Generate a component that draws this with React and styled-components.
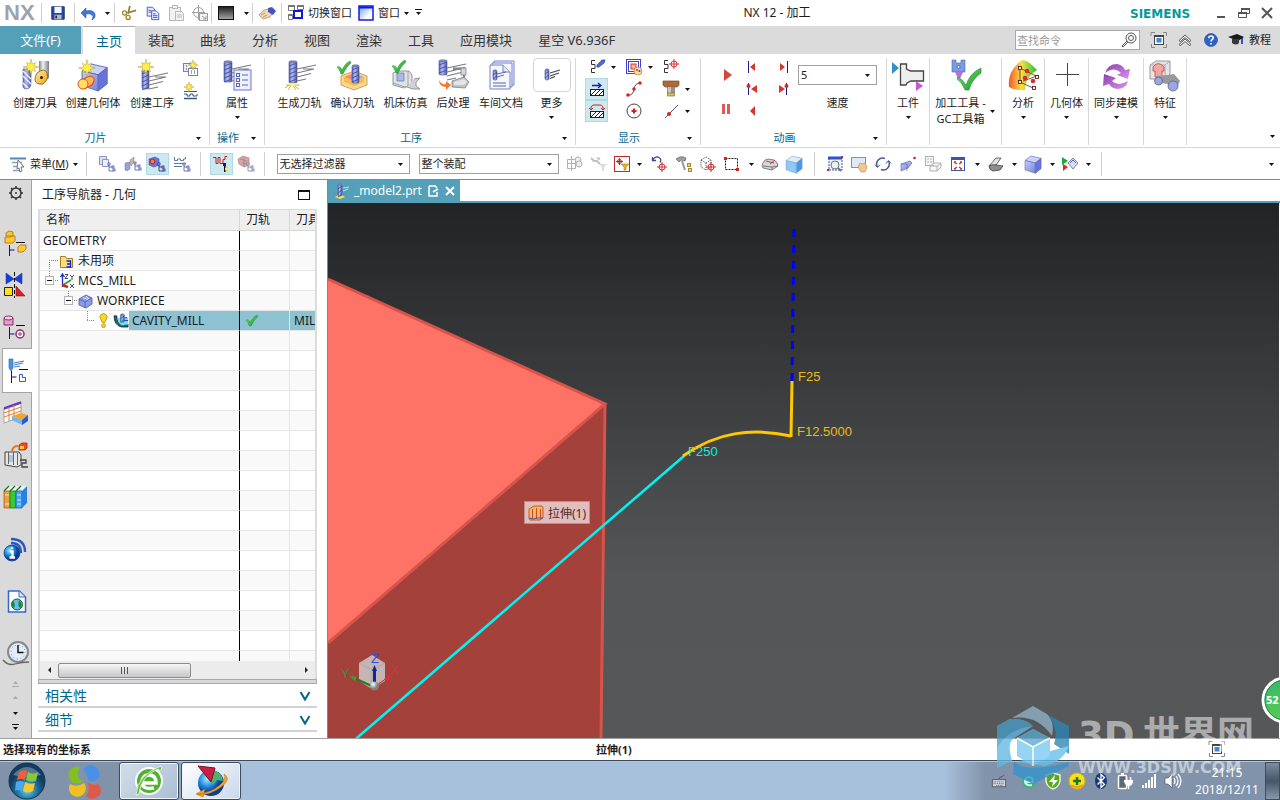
import React from "react";
import styled, { createGlobalStyle, css } from "styled-components";

const GlobalStyle = createGlobalStyle`
  *, *::before, *::after { box-sizing: border-box; }
  html, body { margin: 0; padding: 0; }
  body {
    font-family: "Noto Sans", "Noto Sans CJK SC", sans-serif;
    font-size: 11px;
    color: #1c1c1c;
    background: #fff;
  }
  button, input, select { font: inherit; color: inherit; }
  button { border: 0; background: none; padding: 0; margin: 0; }
`;

/* ---------- shared drawing parts ---------- */

const Defs = () => (
  <DefsSvg aria-hidden="true">
    <defs>
      <linearGradient id="blue" x1="0" x2="1"><stop offset="0" stopColor="#5c66b8" /><stop offset=".4" stopColor="#b4bef2" /><stop offset="1" stopColor="#4a54a4" /></linearGradient>
      <linearGradient id="steel" x1="0" x2="1"><stop offset="0" stopColor="#808288" /><stop offset=".4" stopColor="#f0f0f2" /><stop offset="1" stopColor="#7c7e84" /></linearGradient>
      <linearGradient id="box" x1="0" x2="1" y2="1"><stop offset="0" stopColor="#c3cdf8" /><stop offset="1" stopColor="#7483e0" /></linearGradient>
      <linearGradient id="gold" x1="0" x2="1" y2="1"><stop offset="0" stopColor="#fff2a0" /><stop offset="1" stopColor="#f0a010" /></linearGradient>
      <linearGradient id="green" x1="0" x2="1" y2="1"><stop offset="0" stopColor="#7be060" /><stop offset="1" stopColor="#129a30" /></linearGradient>
      <linearGradient id="rainbow" x1="0" x2="1"><stop offset="0" stopColor="#f05a30" /><stop offset=".45" stopColor="#f8e040" /><stop offset="1" stopColor="#20c040" /></linearGradient>
      <linearGradient id="pink" x1="0" x2="1"><stop offset="0" stopColor="#f8a020" /><stop offset=".5" stopColor="#f070c0" /><stop offset="1" stopColor="#60e0e0" /></linearGradient>
      <linearGradient id="purple" x1="0" x2="1" y2="1"><stop offset="0" stopColor="#8f3fb0" /><stop offset="1" stopColor="#d595ea" /></linearGradient>
      <linearGradient id="dark" x2="0" y2="1"><stop offset="0" stopColor="#1c1c1c" /><stop offset="1" stopColor="#a8a8a8" /></linearGradient>
      <linearGradient id="skyfade" x2="1" y2="1"><stop offset="0" stopColor="#68a0e8" /><stop offset=".7" stopColor="#ffffff" /></linearGradient>
      <radialGradient id="orb" cy=".75"><stop offset="0" stopColor="#58d8f4" /><stop offset=".6" stopColor="#206a9c" /><stop offset="1" stopColor="#123c60" /></radialGradient>
      <radialGradient id="ball" cx=".35" cy=".3"><stop offset="0" stopColor="#ffffff" /><stop offset="1" stopColor="#808080" /></radialGradient>
      <radialGradient id="globe" cx=".35" cy=".35"><stop offset="0" stopColor="#a0f0ff" /><stop offset=".6" stopColor="#2088e0" /><stop offset="1" stopColor="#0a3c98" /></radialGradient>
      <linearGradient id="badge" x2="0" y2="1"><stop offset="0" stopColor="#35b869" /><stop offset="1" stopColor="#58cc50" /></linearGradient>
    </defs>
  </DefsSvg>
);
const DefsSvg = styled.svg`position: absolute; width: 0; height: 0;`;

const starPoints = (cx, cy, r) => {
  const pts = [];
  for (let i = 0; i < 16; i += 1) {
    const rad = i % 2 ? r * 0.4 : i % 4 ? r * 0.8 : r;
    const a = (Math.PI * i) / 8;
    pts.push(`${(cx + rad * Math.sin(a)).toFixed(1)},${(cy - rad * Math.cos(a)).toFixed(1)}`);
  }
  return pts.join(" ");
};
const Star = ({ cx, cy, r }) => <polygon points={starPoints(cx, cy, r)} fill="#fff04c" stroke="#b59a3c" strokeWidth=".5" />;
const Mill = ({ x, y, w = 8, h = 22 }) => (
  <g>
    <rect x={x} y={y} width={w} height={h} rx="1.5" fill="url(#blue)" stroke="#4c5494" strokeWidth=".6" />
    {Array.from({ length: Math.floor(h / 4) }, (_, i) => (
      <path key={i} d={`M${x} ${y + 5 + i * 4}l${w} -3`} stroke="#434b98" strokeWidth=".9" />
    ))}
    <ellipse cx={x + w / 2} cy={y + 1} rx={w / 2} ry="1.3" fill="#7480b8" />
  </g>
);
const Feed = ({ x, y }) => (
  <path d={`M${x} ${y + 4}l19 -4M${x} ${y + 8}l17 -4l-11 0M${x} ${y + 12}l14 -3.500M${x} ${y + 16}l9 -2`} fill="none" stroke="#7a7c82" strokeWidth="1.200" />
);
const Tick = ({ x, y, s = 1 }) => (
  <path transform={`translate(${x} ${y}) scale(${s})`} d="M0 6C2 5 4 6 5 9C7 5 9 2 13 0L14 2C10 5 8 9 6 13H4C3 10 2 8 0 6z" fill="url(#green)" stroke="#109030" strokeWidth=".5" />
);
const Cube = ({ x, y, s = 1, fill = "url(#box)", top = "#c8d2fa", side = "#6474d8", line = "#5a66b4" }) => (
  <g transform={`translate(${x} ${y}) scale(${s})`} stroke={line} strokeWidth=".5">
    <path d="M0 4L5 0L14 2L9 6z" fill={top} />
    <path d="M0 4L9 6V15L0 12z" fill={fill} />
    <path d="M9 6L14 2V11L9 15z" fill={side} />
  </g>
);
const Branch = ({ x, y, c = "#4c58a4" }) => (
  <g fill="#fff" stroke={c} strokeWidth=".8"><path d={`M${x} ${y}v7h4M${x} ${y + 3}h3`} fill="none" /><rect x={x - 1} y={y - 1} width="2" height="2" /><rect x={x + 4} y={y + 5} width="2" height="2" /><rect x={x + 3} y={y + 2} width="2" height="2" /></g>
);
const Target = ({ x, y, r = 3 }) => (
  <g stroke="#d02020" strokeWidth=".9" fill="none"><circle cx={x} cy={y} r={r} /><path d={`M${x - r - 2} ${y}H${x + r + 2}M${x} ${y - r - 2}V${y + r + 2}`} /></g>
);
const Hatch = () => (
  <g stroke="#202020" fill="none"><rect x="2.500" y="9.500" width="13" height="6" fill="#fff" /><path d="M3 15l5-5M7 15l5-5M11 15l4-4" strokeWidth="1" /></g>
);

/* ---------- icon drawings, each on its own grid ---------- */

const art = {
  createTool: [32, <><path d="M4 10h8v14q0 6-5 6q-4 0-3-6z" fill="url(#blue)" stroke="#505898" strokeWidth=".6" /><path d="M4 17l8 8M4 12l8 8M4 24l5 5" stroke="#eef" strokeWidth="1.500" /><path d="M20 2h10v17l-3 2-7-7z" fill="url(#steel)" /><path d="M18 14q8-6 10 0q2 7-4 11q-7 1-8-4q0-4 2-7z" fill="url(#gold)" stroke="#7a5a20" strokeWidth=".8" /><circle cx="22.500" cy="18.500" r="1.500" fill="#222" /><Star cx={12} cy={8} r={8} /></>],
  createGeo: [32, <><Cube x={5} y={5} s={1.8} /><path d="M6 20l7-3q5 1 4 5t-4 5l-6 3" fill="#ffb850" stroke="#e05020" strokeWidth="1.200" /><circle cx="6" cy="25" r="5" fill="#ffe060" stroke="#e05020" /><Star cx={10} cy={9} r={8.500} /></>],
  createOp: [32, <><Mill x={6} y={10} w={7} h={20} /><Feed x={13} y={14} /><Star cx={10} cy={8} r={8} /></>],
  program: [18, <><rect x="1.500" y="3.500" width="8" height="8" fill="#e8ebf8" stroke="#7880b0" /><rect x="6.500" y="8.500" width="9" height="7" fill="#fff" stroke="#7880b0" /><path d="M9 11h1M12 11h1M9 13h1M12 13h1M4 6h1M4 9h1" stroke="#444" /><Star cx={11} cy={5} r={5} /></>],
  method: [18, <><path d="M2 9.500h13M2 12h3v2h3v-2h3v2h4v-2" stroke="#2c5a8a" fill="none" /><path d="M2 16.500h13" stroke="#2c5a8a" strokeWidth="1.500" /><Star cx={7} cy={5} r={5} /></>],
  attrs: [32, <><Mill x={3} y={2} w={8} h={21} /><Feed x={11} y={6} /><rect x="13" y="11" width="17" height="20" fill="#eef0ff" stroke="#6a76c8" /><g fill="#fff0a0" stroke="#5a66b8"><rect x="15.500" y="14.500" width="3" height="3" /><rect x="15.500" y="19.500" width="3" height="3" /><rect x="15.500" y="24.500" width="3" height="3" /></g><path d="M21 16h6M21 21h6M21 26h6" stroke="#5a66b8" /></>],
  generate: [32, <><path d="M2 26h14M4 31l4-6 4 6M1 29l6-4M15 30l-6-4" stroke="#d8b838" /><Mill x={5} y={2} w={8} h={22} /><Feed x={13} y={6} /><path d="M4 25l4-1 5 1-4 3z" fill="#fff27a" /></>],
  verify: [32, <><path d="M4 17l13-5 13 5v9l-13 5-13-5z" fill="#f8d890" stroke="#c89030" strokeWidth=".8" /><path d="M7 18l10-4 10 4-10 4z" fill="url(#pink)" /><path d="M7 18v5l10 4 10-4v-5l-10 4z" fill="#f4bc58" /><Mill x={15} y={6} w={7} h={18} /><Tick x={0} y={2} /></>],
  simulate: [32, <><path d="M3 14l4-2h12l3 4v9l-8 4-11-3z" fill="#e0e2e6" stroke="#94969c" /><path d="M7 14h7v8H7z" fill="#a8b8e8" stroke="#6c7690" strokeWidth=".7" /><path d="M18 12v15M3 24l12 4 10-2" stroke="#a0a2a8" fill="none" /><path d="M24 20l6-1-4 4v4l4 3h-7l-6-2" fill="#d0d2d6" stroke="#94969c" /><Tick x={2} y={1} /></>],
  post: [32, <><Mill x={2} y={1} w={8} h={15} /><Feed x={10} y={5} /><path d="M16 10h12M27 8v16" stroke="#85878c" strokeWidth="2" /><rect x="24" y="9" width="5" height="7" fill="#d4d6da" stroke="#777" strokeWidth=".7" /><path d="M15 22l12-4 5 5-4 6-13-1z" fill="#c0c2c8" stroke="#707278" strokeWidth=".7" /><path d="M17 23l10-3 3 3-3 3-10 0z" fill="#e2e4e8" /><path d="M2 21q2 5 7 4v-3l5 4-5 5v-3q-7 0-7-7z" fill="#f07a30" /></>],
  docs: [32, <><g fill="#f4f5fd" stroke="#7582c8"><path d="M9 2h20v24H9z" /><path d="M7 4h20v24H7z" /><path d="M5 6h13l7 7v17H5z" /></g><path d="M18 6v7h7" fill="#dfe4fa" stroke="#7582c8" /><Mill x={8} y={11} w={4} h={10} /><path d="M12 15l9-2M12 18l7-2M8 24h13M8 27h13" stroke="#5a66a8" /></>],
  more: [20, <><Mill x={3} y={4} w={4} h={11} /><path d="M8 8l10-3M8 11l9-3M8 13.500l5-2" stroke="#44464c" strokeWidth="1.200" /></>],
  probe: [18, <><path d="M7 2.500H3.500v4H7M7 6.500v4H3.500v4H7" stroke="#333" fill="none" /><path d="M9 7l5-5 3 0-1 3-5 4q-3 1-2-2z" fill="#4f6cd8" stroke="#2c408c" strokeWidth=".7" /></>],
  layers: [18, <><g fill="none" stroke="#4040d0"><rect x="1.500" y="1.500" width="14" height="14" /><rect x="3.500" y="3.500" width="10" height="10" /></g><rect x="6" y="6" width="5" height="5" fill="#ffb090" stroke="#d04020" /><circle cx="13" cy="13" r="4" fill="#f5dca0" stroke="#b08040" strokeWidth=".7" /><circle cx="12" cy="12" r="1" fill="#d03030" /><circle cx="14.500" cy="13" r="1" fill="#3040c0" /></>],
  pointer: [18, <><path d="M6 2.500H2.500v4H6M6 6.500v4H2.500v4H6" stroke="#333" fill="none" /><Target x={12} y={6} r={3} /></>],
  hatchArrow: [18, <><Hatch /><path d="M4 5.500h9M10 3l3 2.500-3 2.500" stroke="#1020c0" fill="none" strokeWidth="1.300" /></>],
  hatchLoop: [18, <><Hatch /><path d="M3 8V5q1-2 3-2h6q2 0 3 2v3M1 6l2 2 2-2M13 6l2 2 2-2" stroke="#d02020" fill="none" /></>],
  curve: [18, <><path d="M3 15q5 1 6-6q1-6 6-6" stroke="#8a4040" fill="none" /><circle cx="3" cy="15" r="1.800" fill="#d02828" /><circle cx="9" cy="9" r="1.800" fill="#d02828" /><circle cx="15" cy="3" r="1.800" fill="#d02828" /></>],
  circleDot: [18, <><circle cx="9" cy="9" r="7" fill="none" stroke="#444" /><path d="M6.500 9h5M9 6.500v5" stroke="#d02020" strokeWidth="2" /></>],
  holder: [18, <><path d="M1 1h16v4l-2 2H3L1 5z" fill="#b06838" stroke="#804c28" strokeWidth=".7" /><rect x="5" y="7" width="8" height="6" fill="#909296" /><rect x="6" y="7" width="3" height="6" fill="#c4c6ca" /><rect x="5.500" y="13" width="7" height="3" fill="#e0c040" stroke="#806020" strokeWidth=".6" /></>],
  lineDot: [18, <><path d="M3 16L16 3" stroke="#555" /><circle cx="7" cy="12" r="2" fill="#d02828" /></>],
  play: [14, <path d="M3 1l8 6-8 6z" fill="#d8453f" />],
  pause: [14, <path d="M3 2h3v10H3zM8 2h3v10H8z" fill="#df5a50" />],
  back: [14, <path d="M10 2v10L5 7z" fill="#d8352f" />],
  toStart: [14, <><path d="M3.500 1v12" stroke="#1c1c90" /><path d="M10 3v8L5 7z" fill="#d8352f" /></>],
  toEnd: [14, <><path d="M11.500 1v12" stroke="#1c1c90" /><path d="M4 3v8l5-4z" fill="#d8352f" /></>],
  stepBack: [14, <><path d="M3.500 1v12" stroke="#1c1c90" /><path d="M12 3v8L6 7z" fill="#d8352f" /><circle cx="3.500" cy="4" r="2" fill="#d02828" /></>],
  stepFwd: [14, <><path d="M10.500 1v12" stroke="#1c1c90" /><path d="M3 3v8l6-4z" fill="#d8352f" /><circle cx="10.500" cy="4" r="2" fill="#d02828" /></>],
  part: [32, <><path d="M0 3l7 6-7 6z" fill="#3390c8" /><path d="M24 22l7 5-7 5z" fill="#c858d0" /><path d="M8.500 5h6v5l4 2h13v10H19l-4 2-1 2H8.500z" fill="#eeeeee" stroke="#444" strokeWidth="1.300" /></>],
  gcTool: [32, <><path d="M2 1h4v3h5V1h4v12H2z" fill="#7a9ce0" stroke="#4c6aac" strokeWidth=".6" /><circle cx="8.500" cy="8" r="1.500" fill="#e8eefc" stroke="#345" strokeWidth=".6" /><path d="M5 13h8l-4 9z" fill="#b870dc" /><path d="M8 18q4 2 8 8Q20 14 31 9v5Q22 20 19 31h-4Q12 23 7 20z" fill="url(#green)" stroke="#1c8c34" strokeWidth=".6" /></>],
  analyse: [32, <><path d="M2 28Q0 12 15 1Q20 0 30 11Q18 18 18 31Q8 32 2 28z" fill="url(#rainbow)" /><path d="M13 8v15M13 9l16 8M13 23l13 6M16 22l14-5" stroke="#904838" fill="none" /><g fill="#d83028"><circle cx="20" cy="12" r="2.300" /><circle cx="18" cy="19" r="2.300" /><circle cx="26" cy="22" r="2.300" /></g><g fill="#ffff60" stroke="#400060" strokeWidth=".8"><rect x="11.500" y="7.500" width="3" height="3" /><rect x="11.500" y="21.500" width="3" height="3" /><rect x="28.500" y="16.500" width="3" height="3" /><rect x="25.500" y="27.500" width="3" height="3" /></g></>],
  plus: [32, <path d="M16.500 4v23M5 15.500h23" stroke="#444" />],
  sync: [32, <><path d="M5 14Q8 5 17 5q6 1 8 6l5-1-2 10-11-4 4-2q-7-7-16 0z" fill="url(#purple)" /><path d="M28 22Q26 30 17 30q-6-1-8-5l-6 2 1-12 12 4-4 3q6 6 16 0z" fill="url(#purple)" /></>],
  feature: [32, <><path d="M1 6l6-4h14v13l-5 5H1z" fill="#e4e5e8" stroke="#999" /><path d="M1 6h15v14M16 6l5-4" fill="none" stroke="#aaa" /><path d="M4 8q5-7 11 0v4h-2v6H6v-6H4z" fill="#f0a8a0" stroke="#c84038" strokeWidth=".8" /><path d="M6 17l13-1 6-1 6 7-4 8-5 1-3-6-7-1z" fill="#97999f" /><circle cx="9.500" cy="22" r="4" fill="#98a6ea" stroke="#666" strokeWidth=".8" /><circle cx="24" cy="27" r="5" fill="#98a6ea" stroke="#666" strokeWidth=".8" /></>],
  save: [18, <><path d="M2 2h14v14H2z" fill="#2a4aa0" stroke="#16285c" /><rect x="5" y="2" width="8" height="7" fill="#f4f6fb" /><rect x="5" y="11" width="8" height="5" fill="#b8bcc8" /><rect x="6" y="12" width="2" height="3" fill="#16285c" /></>],
  undo: [18, <path d="M2 9L7 4v3q7-2 9 3q1 4-3 6q2-4 0-5q-2-2-6-1v4z" fill="#3f78d8" stroke="#2858b0" strokeWidth=".6" />],
  cut: [18, <><path d="M8 10L10 1M7 9l10-3" stroke="#908030" strokeWidth="2" /><circle cx="4" cy="9" r="2.300" fill="none" stroke="#a08828" strokeWidth="1.500" /><circle cx="8" cy="14" r="2.300" fill="none" stroke="#a08828" strokeWidth="1.500" /></>],
  copy: [18, <g fill="#e6eaff" stroke="#4450b8"><path d="M2.500 2.500h6l2 2v8h-8z" /><path d="M7.500 6.500h5l3 3v7h-8z" /><path d="M9 10h3M9 12h5M9 14h5M4 6h3M4 8h3" /></g>],
  paste: [18, <g fill="#f2f2f2" stroke="#b8b8b8"><rect x="2.500" y="3.500" width="11" height="13" /><rect x="5.500" y="1.500" width="5" height="3" /><path d="M8.500 7.500h6l2 2v7h-8z" /><path d="M10 11h5M10 13h5" /></g>],
  aim: [18, <g fill="none" stroke="#a0a0a0"><circle cx="7.500" cy="8.500" r="5" /><path d="M7.500 1v15M1 8.500h13" /><rect x="8.500" y="9.500" width="8" height="7" fill="#f4f4f4" /><path d="M11 12l4 3v-3M15 15h-3" /></g>],
  shade: [18, <><rect x="1.500" y="2.500" width="15" height="13" fill="url(#dark)" stroke="#111" /></>],
  hand: [18, <><path d="M1 11l5-5 5-1 4 3-3 5-7 2z" fill="#f0d8b4" stroke="#b09068" strokeWidth=".8" /><path d="M10 4l4-1 4 4-3 4-5-3z" fill="#4454c8" /><path d="M3 11l4-2M5 13l4-2" stroke="#b08858" strokeWidth=".8" /></>],
  switchWin: [18, <g fill="none" strokeWidth="1"><path d="M1.500 1.500h6v5h-6zM10.500 1.500h6v4h-6zM1.500 10.500h4v5h-4z" stroke="#777" /><path d="M1 2h7M10 2h7M1 11h4" stroke="#777" strokeWidth="2" /><rect x="7" y="7" width="8" height="7" fill="#fff" stroke="#1018e0" strokeWidth="2" /></g>],
  win: [18, <><rect x="2" y="2" width="14" height="14" fill="url(#skyfade)" stroke="#1018f0" strokeWidth="1.500" /><path d="M2 3.500h14" stroke="#1018f0" strokeWidth="2" /></>],
  minimise: [14, <path d="M3 11h8" stroke="#555" strokeWidth="2" />],
  restore: [14, <g fill="#fff" stroke="#555"><path d="M4.500 2.500h8v5h-8z" /><path d="M4 3h9" strokeWidth="2" /><path d="M1.500 6.500h8v5h-8z" /><path d="M1 7h9" strokeWidth="2" /></g>],
  close: [14, <path d="M2 2l10 10M12 2L2 12" stroke="#555" strokeWidth="2" />],
  find: [16, <g fill="none" stroke="#555"><circle cx="10" cy="6" r="5" /><circle cx="10" cy="6" r="2.500" /><path d="M6 9l-5 5 1 1 5-5" /></g>],
  fullscreen: [16, <><path d="M0 4V.500h4M12 .500h3.500V4M15.500 12v3.500H12M4 15.500H.500V12" fill="none" stroke="#888" /><rect x="3.500" y="3.500" width="9" height="9" fill="#fff" stroke="#444" /><rect x="5.500" y="6" width="5" height="4.500" fill="#3f87d8" /><path d="M3 4.500h10" stroke="#444" /></>],
  collapse: [16, <path d="M2 8.500L8 3l6 5.500-1.500 1L8 5.500 3.500 9.500zM2 12.500L8 7l6 5.500-1.500 1L8 9.500l-4.500 4z" fill="#fff" stroke="#333" strokeWidth=".8" />],
  help: [16, <><circle cx="8" cy="8" r="6.500" fill="#2c62c4" stroke="#1c4494" strokeWidth=".6" /><path d="M5.800 6.200q0-2.200 2.200-2.200t2.200 2q0 1-1.100 1.700T8 9.500M8 11v1.500" fill="none" stroke="#fff" strokeWidth="1.600" /></>],
  cap: [18, <><path d="M1 6l9-3 7 3-6 4z" fill="#1a1a1a" /><path d="M5 8v4q4 3 7 0V8" fill="#383838" /><path d="M15 7v6" stroke="#1018c0" strokeWidth="1.500" /></>],
  menu: [18, <><path d="M1 3.500h16" stroke="#5c84bc" strokeWidth="2" /><path d="M3 7.500h10M4 11.500h8M4 15.500h8" stroke="#88a0c0" strokeWidth="1.500" /><path d="M9 5l6 7-3 0 1 4-2 1-1-4-2 1z" fill="#fff" stroke="#555" strokeWidth=".8" /></>],
  viewProgram: [18, <><path d="M1.500 1.500h7v8h-7z" fill="#dce0f4" stroke="#8c96c4" /><path d="M4.500 4.500h6v7h-6z" fill="#eef" stroke="#8c96c4" /><Branch x={11} y={9} /></>],
  viewTool: [18, <><path d="M2 8l5-1v7l-3 2-2-1z" fill="#98a2d8" stroke="#6a74ac" strokeWidth=".5" /><path d="M7 5l4-3v5l-3 4z" fill="#c8b4a8" stroke="#907a70" strokeWidth=".5" /><Branch x={12} y={8} /></>],
  viewGeo: [18, <><path d="M1 4l6-2 4 2v6l-5 2-5-2z" fill="#6478d8" stroke="#4450a0" strokeWidth=".6" /><circle cx="4.500" cy="6.500" r="2.300" fill="#f08050" stroke="#c02020" /><Branch x={11} y={9} c="#1c1c80" /></>],
  viewMethod: [18, <><path d="M1.500 2v3.500h3V4h3v1.500h3V4h2V2M1 8.500h12M1 11.500h8" fill="none" stroke="#5c78a4" /><Branch x={11} y={9} /></>],
  showPath: [18, <><path d="M1 2.500h3v6h2v-6h2v6h3v-4h2v-3h2" fill="none" stroke="#c81818" /><path d="M12.500 9v8M12 12h2M12 16h2" stroke="#111" /><rect x="11" y="8" width="3" height="3" fill="#1018a0" /><rect x="14" y="11" width="2" height="2" fill="#f0e040" /><rect x="14" y="15" width="2" height="2" fill="#f0e040" /></>],
  showIpw: [18, <><path d="M1 4l5-3 6 2v7l-5 2-5-3z" fill="#dca4a4" stroke="#b48080" strokeWidth=".7" /><path d="M3 4l7 2M5 8l5 1M7 3v9" stroke="#8a8a8a" strokeWidth=".8" /><Branch x={11} y={9} c="#74809c" /></>],
  ghostTree: [18, <g fill="none" stroke="#b0b0b0"><path d="M1.500 4.500h8v9h-8zM5.500 1v15M1 8.500h8" /><circle cx="12" cy="5" r="3" fill="#eee" /><circle cx="13" cy="9" r="3" fill="#eee" /></g>],
  ghostFilter: [18, <><path d="M1 3l3 3h3l3 3M7 3l3 1" fill="none" stroke="#c0c0c0" strokeWidth="2" /><path d="M9 9h8l-3 3v4h-2v-4z" fill="#dcdcdc" /></>],
  redFilter: [18, <><rect x="1.500" y="1.500" width="15" height="15" fill="#fff" stroke="#c82828" /><g stroke="#a03030" fill="none"><circle cx="6.500" cy="6.500" r="2" /><path d="M6.500 3v7M3 6.500h7" /></g><path d="M8 9h8l-3 3v3h-2v-3z" fill="#f0b020" stroke="#c07818" strokeWidth=".6" /></>],
  undoSel: [18, <><path d="M2.500 6V2M2 5.500h4M2 5.500q4-5 7-3t1 5" fill="none" stroke="#3c4890" strokeWidth="1.300" /><Target x={12} y={12} /></>],
  hammer: [18, <><path d="M1 4q5-4 10-1l-1 3-4-1-2 2z" fill="#9c9ea4" stroke="#666" strokeWidth=".7" /><path d="M7 6l3 9" stroke="#999" strokeWidth="2" /><g fill="#f0d860" stroke="#a08c40"><rect x="12.500" y="8.500" width="3" height="3" /><rect x="13.500" y="13.500" width="3" height="3" /></g></>],
  cubeTarget: [18, <><path d="M2 5l5-3 5 3v7l-5 3-5-3zM2 5l5 3 5-3M7 8v7" fill="none" stroke="#333" strokeDasharray="1 1" strokeWidth=".9" /><Target x={12} y={12} /></>],
  dashRect: [18, <><rect x="2.500" y="3.500" width="12" height="11" fill="none" stroke="#222" strokeDasharray="2 1" /><path d="M1 2h3v3H1zM13 13h3v3h-3z" fill="#d02020" /></>],
  fold: [18, <><path d="M1 11q1-6 6-7l6 1q4 2 4 6l-6 4-9-2z" fill="#d4d6da" stroke="#666" strokeWidth=".8" /><path d="M5 6l8 2M9 9l5-4" stroke="#c02020" strokeWidth=".8" /><path d="M2 11l9 1 6-1M11 12v3" stroke="#666" strokeWidth=".8" fill="none" /></>],
  bluebox: [18, <><Cube x={1} y={1} s={1.150} fill="#8cc8f8" top="#dceefa" side="#4c94e8" line="#78a8d4" /></>],
  fit: [18, <><rect x="3" y="3" width="13" height="12" fill="#eef3ff" stroke="#3050c8" strokeDasharray="2 1" /><path d="M2 3h14" stroke="#3050c8" strokeWidth="3" /><circle cx="9" cy="10" r="4" fill="#e8f0f8" stroke="#777" /><path d="M12 13l3 3" stroke="#777" strokeWidth="2" /><path d="M15 1h2v2h-2zM1 14h2v2H1z" fill="#d02020" /></>],
  pan: [18, <><rect x="1.500" y="2.500" width="14" height="10" fill="#e0e8fa" stroke="#8090c0" /><path d="M8 12l2-4 2 1 3-1 2 4-2 5h-4z" fill="#f0c890" stroke="#b08850" strokeWidth=".6" /></>],
  rotate: [18, <g fill="none" stroke="#4a5c9c" strokeWidth="1.500"><path d="M3.500 12A6 6 0 0 1 11 3.500" /><path d="M14.500 6A6 6 0 0 1 7 14.500" /><path d="M1 9.500l2.500 3 2.500-3M17 8.500l-2.500-3-2.500 3" strokeWidth="1" /></g>],
  persp: [18, <><path d="M2 9l9-3 2 2-4 5-7 3z" fill="url(#box)" stroke="#5060a8" strokeWidth=".6" /><path d="M2 9h6v7" fill="none" stroke="#5060a8" strokeWidth=".6" /><circle cx="15.500" cy="3" r="1.300" fill="#d02020" /></>],
  ghostSheet: [18, <g fill="#f6f6f6" stroke="#b0b0b0"><rect x="1.500" y="1.500" width="8" height="9" /><path d="M3 4h2M6 4h2M3 7h2M6 7h2" /><path d="M6 11l4-3h7l-4 3zM6 11v5h7l4-4V8M13 11v5" /></g>],
  windowRed: [18, <><rect x="2.500" y="3.500" width="13" height="12" fill="#fff" stroke="#3c54b0" /><path d="M2 3.500h14" stroke="#3c54b0" strokeWidth="3" /><path d="M5 7l3 2M13 7l-3 2M5 14l3-2M13 14l-3-2M5 7h2M11 7h2M5 14h2M11 14h2" stroke="#e03818" strokeWidth="1.500" /></>],
  section: [18, <><path d="M2 11L9 3l5 0-5 7z" fill="#e4e4e4" stroke="#444" strokeWidth=".8" /><path d="M2 11q3-2 7-1l7 1-3 4-7 1q-4-1-4-5z" fill="#8c8e90" stroke="#444" strokeWidth=".8" /></>],
  shadedBox: [18, <Cube x={1} y={1} s={1.150} />],
  mirrorView: [18, <><path d="M1 2l6 4-6 4z" fill="#20a838" /><path d="M2 9l5 3-5 4z" fill="#d82828" /><path d="M12 3l5 5-5 6-5-6z" fill="#d8ddf4" stroke="#606898" strokeWidth=".8" /><path d="M9 8l3-3 3 3" fill="none" stroke="#606898" /></>],
  gear: [18, <><circle cx="9" cy="9" r="5" fill="none" stroke="#333" strokeWidth="1.500" /><circle cx="9" cy="9" r="1" fill="#333" /><path d="M9 2v2M9 14v2M2 9h2M14 9h2M4 4l1.500 1.500M14 4l-1.500 1.500M4 14l1.500-1.500M14 14l-1.500-1.500" stroke="#333" strokeWidth="1.500" /></>],
  railAssembly: [26, <><g fill="#ffc830" stroke="#a87008" strokeWidth=".8"><path d="M3 3l3-2 4 1v4H3zM2 7h6l1-1h3v5l-2 2H2zM15 17l2-2h6v4l-3 3h-5z" /></g><path d="M13 12.500h9" stroke="#111" /><path d="M6.500 15v11M6.500 20h5" stroke="#101090" /></>],
  railConstraint: [26, <><path d="M3 1v11l8-5zM19 1v11l-8-5z" fill="#1c3cd8" stroke="#1430a8" strokeWidth=".5" /><path d="M11.500 0v26" stroke="#111" strokeDasharray="4 2" /><path d="M1.500 15.500h8v8h-8z" fill="#ffe020" stroke="#222" /><path d="M13 14l9 10h-9z" fill="#d82020" stroke="#801010" strokeWidth=".6" /></>],
  railPart: [26, <><path d="M1 4h9v7H1z" fill="#e0a0c8" stroke="#8c2c64" /><ellipse cx="5.500" cy="4" rx="4.500" ry="2" fill="#f4d0e4" stroke="#8c2c64" /><path d="M13 11.500h9" stroke="#111" /><path d="M6.500 13v12M6.500 20h5" stroke="#101090" /><circle cx="17" cy="20" r="4" fill="#fff" stroke="#8c2c64" strokeWidth="1.500" /><circle cx="17" cy="20" r="1.300" fill="none" stroke="#8c2c64" /></>],
  railOp: [26, <><path d="M4 1h4v9l-2 3-2-3z" fill="#4c94dc" stroke="#2860a8" strokeWidth=".6" /><path d="M9 5l10-2M9 7l9-2M9 9l6-1" stroke="#3868b0" strokeWidth=".9" /><path d="M14 11.500h9" stroke="#111" /><path d="M6.500 13v12M6.500 19h5" stroke="#101090" /><path d="M14.500 16.500h3v3h3v4h-6z" fill="#fff" stroke="#2860c8" /></>],
  railMachine: [26, <><path d="M1 7l17-6v15L1 22z" fill="#fff" stroke="#888" strokeWidth=".7" /><path d="M1 7l17-6M1 8l17-6" stroke="#6a38c0" strokeWidth="1.500" /><path d="M1 12l17-6M1 16l17-6M6 6v14M11 4v14" stroke="#e08030" /><path d="M9 15l9-3 7 2-6 5z" fill="#f8a030" /><path d="M9 15l10 4v5l-10-5z" fill="#70b8f0" /><path d="M19 19l6-5v6l-6 4z" fill="#1c60d8" /></>],
  railFixture: [26, <><path d="M2 9h14l2 3v10l-4 2-12-2z" fill="#e4e6e4" stroke="#444" /><path d="M5.500 9v12M10.500 9v13M14.500 10v12" stroke="#666" /><rect x="6" y="12" width="4" height="7" fill="#a4c8e4" /><path d="M17 17h6v3h-4v4h6" fill="none" stroke="#444" strokeWidth="1.300" /><path d="M9 8q1-5 6-5" stroke="#f07020" strokeWidth="2" fill="none" /><path d="M16 2l3-2h5v5l-2 2h-6z" fill="#f04828" stroke="#c02010" strokeWidth=".8" /><path d="M17 3h4v3h-4z" fill="#ffd020" /></>],
  railLibrary: [26, <><path d="M1 6l5-5h18v17l-5 5H1z" fill="#e8f4e8" /><path d="M1 6h6v17H1z" fill="#e8a040" stroke="#a86010" strokeWidth=".8" /><path d="M7 6h6v17H7z" fill="#38c838" stroke="#148014" strokeWidth=".8" /><path d="M13 6h6v17h-6z" fill="#48a8f0" stroke="#1860b0" strokeWidth=".8" /><path d="M19 6l5-5v17l-5 5z" fill="#2880e0" /><path d="M1 6l5-5M7 6l5-5M13 6l5-5" stroke="#207030" strokeWidth="1.300" /><path d="M2 10h4M2 19h4M14 10h4M14 15h4M14 19h4" stroke="#fff" strokeWidth=".7" /></>],
  railInfo: [26, <><circle cx="9" cy="16" r="8" fill="url(#globe)" stroke="#104c98" strokeWidth=".8" /><path d="M9 10v2M7 14.500h2.500V20M6.500 20.500h5.500" stroke="#fff" strokeWidth="2.300" fill="none" /><path d="M8 6q10 0 10 10M8 2q14 0 14 13" fill="none" stroke="#2a58c0" strokeWidth="2.300" /></>],
  railWeb: [26, <><path d="M5.500 2h11l6 6v15h-17z" fill="#fff" stroke="#3468c8" strokeWidth="1.500" /><path d="M16 2v6h6" fill="#d8e8ff" stroke="#3468c8" /><circle cx="14" cy="15.500" r="5.500" fill="#60c0f0" stroke="#186018" /><path d="M10 12q3 3 1 7-4-3-1-7zM16 11q4 3 2 8-4-1-2-8z" fill="#20882c" /></>],
  railHistory: [26, <><circle cx="15" cy="11" r="10" fill="#e4ecfa" stroke="#888" strokeWidth="2" /><circle cx="15" cy="11" r="7" fill="none" stroke="#6880a8" strokeDasharray="1 2.700" /><path d="M15 4v7.500h5.500" stroke="#111" strokeWidth="1.500" fill="none" /><path d="M0 19q5 6 12 4t14-2" stroke="#666" strokeWidth="1.300" fill="none" /></>],
  folder: [16, <><path d="M1.500 3.500h5l1 2h6v9h-12z" fill="#f8dc80" stroke="#a88020" /><path d="M7.500 8h4v6h-4M8 11h4" stroke="#1020d0" strokeWidth="1.300" fill="none" /></>],
  csys: [16, <><path d="M3.500 14V2M1.500 4l2-3 2 3" stroke="#1830d0" fill="none" strokeWidth="1.300" /><path d="M4 12l8-5" stroke="#18a030" strokeWidth="1.600" /><path d="M3 12l6 2" stroke="#d82020" strokeWidth="2.500" /><path d="M6 1.500h3l-3 4h3M11 2l2 2 2-2M13 4v3M11 11l4 4M15 11l-4 4" stroke="#333" strokeWidth=".9" fill="none" /></>],
  workpiece: [16, <><path d="M1 6l7-4 6 3v6l-6 4-7-3z" fill="#8c9ae8" stroke="#4c5cac" strokeWidth=".8" /><path d="M1 6l6 3v6M7 9l7-4" stroke="#4c5cac" fill="none" strokeWidth=".8" /><path d="M5 4.500l5 2M8 3l3 3" stroke="#e0e6ff" /></>],
  bang: [16, <><path d="M5 2q3-3 6 0l1 2-2.500 6h-3L4 4z" fill="#ffd820" stroke="#a88010" strokeWidth=".8" /><circle cx="8" cy="13.500" r="2" fill="#ffd820" stroke="#a88010" strokeWidth=".8" /></>],
  cavity: [16, <><path d="M0 3h3q0 8 5 9h7v3H8Q0 13 0 3z" fill="#186878" stroke="#111" strokeWidth=".7" /><path d="M4 5h11v8H8Q4 11 4 5z" fill="#68e8f0" /><Mill x={7} y={1} w={4} h={9} /><path d="M11 5h3M11 8h4M11 13h4" stroke="#1830a0" strokeWidth=".9" /></>],
  tick: [16, <Tick x={2} y={2} s={0.850} />],
  extrude: [16, <><path d="M1 4l5-3h8l1 2v10l-3 2H2l-1-2z" fill="#f0b860" stroke="#c85828" /><path d="M4.500 4v10M8.500 3v11M12.500 4v10" stroke="#c85028" strokeWidth="1" /><path d="M1 13l4 1 4-1 6 0" stroke="#4850c0" /></>],
  tabTool: [16, <><path d="M2 14l5-3 5 3-5 2z" fill="#ffe040" /><Mill x={5} y={1} w={4} h={12} /><path d="M10 5l6-1M10 8l5-2" stroke="#c8dce8" /></>],
  edit: [12, <><path d="M2 1h6l2 2M10 7v4H2V1" fill="none" stroke="#fff" strokeWidth="1.500" /><path d="M6 7l5-3" stroke="#fff" strokeWidth="1.800" /></>],
  x: [12, <path d="M2 2l8 8M10 2l-8 8" stroke="#fff" strokeWidth="2" />],
  chevron: [14, <path d="M2.500 3L7 10.500 11.500 3" fill="none" stroke="#00688b" strokeWidth="2" />],
  windowBox: [14, <><rect x="1.500" y="2.500" width="11" height="9" fill="#fff" stroke="#111" /><path d="M1 3h12" stroke="#111" strokeWidth="2" /></>],
  start: [40, <><circle cx="20" cy="20" r="18" fill="url(#orb)" stroke="#123450" /><path d="M6 14Q20-2 34 14Q20 18 6 14z" fill="#fff" opacity=".3" /><path d="M12 11q4-3 8-1l-2 9q-4-2-8 0z" fill="#f06030" /><path d="M21 11q5 3 10 0l-2 9q-5 2-10-1z" fill="#88c838" /><path d="M9 21q4-2 8 0l-2 9q-4-2-7 0z" fill="#4ca8e8" /><path d="M18 21q5 3 10 1l-2 8q-5 3-10 0z" fill="#f8c830" /></>],
  clover: [40, <><path d="M16 6A8.500 8.500 0 1 0 19 20Q10 16 16 6z" fill="#84c01c" /><path d="M19 8A8.500 8.500 0 1 1 34 18Q30 22 24 19Q23 12 19 8z" fill="#4a90e4" /><path d="M6 23q7 4 14-1a8.500 8.500 0 1 1-14 1z" fill="#f0c020" /><path d="M23 21q6 4 11 2a8.500 8.500 0 1 1-12 12q5-6 1-14z" fill="#e05848" /></>],
  browser: [40, <><circle cx="20" cy="20" r="14" fill="#fff" /><circle cx="20" cy="20" r="12" fill="#52b030" /><path d="M13 22h14q0-8-7-8t-7 8q1 7 12 5" fill="none" stroke="#fff" strokeWidth="3.500" /><path d="M7 34Q8 14 32 5q2 3-2 6q1-3-1-3Q12 15 10 33z" fill="#68c038" stroke="#fff" strokeWidth=".7" /></>],
  nxApp: [40, <><circle cx="20" cy="22" r="13" fill="url(#globe)" /><path d="M22 9q9 2 10 11l-6-1-4 5-5-8z" fill="#50b070" /><path d="M7 5l17 2-4 14z" fill="#c82040" stroke="#801028" /><path d="M33 13q8 5-3 13-12 9-24 7 14-1 23-9 7-6 4-11zM5 33l9-5-2 8z" fill="#f8a820" stroke="#c07010" strokeWidth=".6" /></>],
  keyboard: [18, <><rect x="1.500" y="7.500" width="15" height="8" fill="#cfd6e0" stroke="#555" /><path d="M3 10h12M3 12h12M6 14h7" stroke="#555" strokeDasharray="1 1" /><path d="M9 7q0-3 4-3l2-2" fill="none" stroke="#555" /></>],
  trayBrowser: [18, <><circle cx="9" cy="9" r="7" fill="#34b86c" /><path d="M5 10h8q0-5-4-5t-4 5q1 4 7 3" stroke="#d0f0f8" strokeWidth="2" fill="none" /></>],
  shield: [18, <><path d="M9 1l7 2v6q-1 6-7 8q-6-2-7-8V3z" fill="#58a820" stroke="#e8f4d8" strokeWidth="1.500" /><path d="M11 3L5 10h4l-1 5 6-7h-4z" fill="#fff" /></>],
  plusBall: [18, <><circle cx="9" cy="9" r="8" fill="#ffe018" stroke="#d8b010" /><path d="M3 13q6 4 12 0" stroke="#e8a020" strokeWidth="2" fill="none" /><path d="M9 5v8M5 9h8" stroke="#187828" strokeWidth="2.500" /></>],
  bluetooth: [18, <><ellipse cx="9" cy="9" rx="6" ry="8" fill="#153b7c" /><path d="M5.500 5.500l7 7-3.500 3V2.500l3.500 3-7 7" fill="none" stroke="#fff" strokeWidth="1.300" /></>],
  power: [18, <><rect x="2.500" y="3.500" width="8" height="13" rx="1" fill="#5c6878" stroke="#fff" strokeWidth="1.500" /><path d="M5 2h3" stroke="#fff" strokeWidth="2" /><path d="M8 8h9v2q-1 4-4 4t-5-4z" fill="#fff" /><path d="M10.500 8V5M14.500 8V5M12.500 13v4" stroke="#fff" strokeWidth="1.500" /></>],
  signal: [18, <path d="M2 13h2v3H2zM5 11h2v5H5zM8 8h2v8H8zM11 5h2v11h-2zM14 2h2v14h-2z" fill="#fff" />],
  speaker: [18, <><path d="M1 6h3l4-4v14l-4-4H1z" fill="#fff" stroke="#445" strokeWidth=".6" /><path d="M10 6q2 3 0 6M12 4q4 5 0 10M14 2q6 7 0 14" stroke="#fff" fill="none" strokeWidth="1.200" /></>],
};

const IconSvg = styled.svg`display: block; flex: none; overflow: visible;`;
const Icon = ({ name, size }) => {
  const [grid, drawing] = art[name];
  const px = size || grid;
  return <IconSvg width={px} height={px} viewBox={`0 0 ${grid} ${grid}`} fill="none" aria-hidden="true">{drawing}</IconSvg>;
};

const Caret = ({ bar, up, muted }) => (
  <IconSvg width="7" height="8" viewBox="0 0 7 8" aria-hidden="true">
    {bar && <path d={up ? "M0 7.500h7" : "M0 .500h7"} stroke={muted ? "#aaa" : "#111"} />}
    <path d={up ? "M1 5h5L3.500 2z" : "M1 3h5L3.500 6z"} fill={muted ? "#aaa" : "#111"} />
  </IconSvg>
);

/* ---------- layout ---------- */

const Page = styled.div`
  position: relative;
  display: flex;
  flex-direction: column;
  height: 100vh;
  min-height: 600px;
  overflow: hidden;
`;
const Bar = styled.div`display: flex; align-items: center; flex: none;`;
const TitleBar = styled(Bar)`height: 26px;`;
const Logo = styled.div`
  width: 41px; padding-left: 4px;
  font: bold 22px/26px "Liberation Sans", sans-serif;
  color: #9aa4ae;
`;
const Divider = styled.span`width: 1px; height: ${(p) => p.$h || 20}px; background: #d0d0d0; flex: none;`;
const Tool = styled.button`
  display: flex; align-items: center; justify-content: center; flex: none;
  width: ${(p) => p.$w || 24}px; height: 22px;
  ${(p) => p.$on && css`background: #cde8ef; border: 1px solid #b0d8e2;`}
`;
const TextTool = styled.button`
  display: flex; align-items: center; gap: 3px; flex: none;
  height: 22px; padding: 0 ${(p) => p.$pad || 0}px; line-height: 16px; white-space: nowrap;
`;
const WindowTitle = styled.h1`flex: 1; margin: 0; text-align: center; font-size: 12px; font-weight: 400; line-height: 26px;`;
const Brand = styled.div`
  width: 80px; padding-top: 2px; color: #009a9a;
  font: bold 12px/24px "DejaVu Sans", sans-serif;
`;

const TabBar = styled(Bar)`height: 28px; background: #dbdbdb; align-items: stretch; font-size: 13px; white-space: nowrap;`;
const Tab = styled.button`
  padding: 0 13px; line-height: 26px; color: #333;
  ${(p) => p.$file && css`width: 81px; margin-right: 2px; background: #54a0b9; color: #fff;`}
  ${(p) => p.$active && css`background: #fff; color: #00688b; border-top: 1px solid #aaa;`}
`;
const TabTools = styled(Bar)`margin-left: auto; padding-right: 9px; font-size: 11px;`;
const Search = styled.label`
  display: flex; align-items: center; width: 125px; height: 20px; margin-right: 7px; padding: 0 2px 0 1px;
  background: #fff; border: 1px solid #a8a8a8;
  input { flex: 1; min-width: 0; border: 0; padding: 0; outline: 0; background: none; }
  input::placeholder { color: #9a9a9a; opacity: 1; }
`;

const Ribbon = styled.div`display: flex; flex: none; height: 94px; padding-top: 4px; border-bottom: 1px solid #d6d6d6;`;
const Group = styled.section`
  display: flex; flex-direction: column; flex: none;
  width: ${(p) => p.$w}px; height: 87px; border-right: 1px solid #d8d8d8;
`;
const GroupBody = styled.div`display: flex; flex: 1; padding-left: ${(p) => p.$pad || 0}px;`;
const GroupFoot = styled.div`
  display: flex; align-items: center; height: 14px; color: #00688b;
  span { flex: 1; text-align: center; padding-left: ${(p) => p.$pad || 0}px; line-height: 14px; }
  button { width: 22px; display: flex; justify-content: center; }
`;
const BigButton = styled.button`
  display: flex; flex-direction: column; align-items: center; flex: none; align-self: flex-start;
  width: ${(p) => p.$w}px; padding-top: 1px; line-height: 16px; white-space: nowrap;
`;
const BigLabel = styled.span`display: flex; align-items: center; gap: 3px; margin: 4px 0 2px; text-align: center;`;
const MoreFrame = styled.span`
  display: flex; align-items: center; justify-content: center;
  width: 38px; height: 34px; margin: -1px 0; border: 1px solid #d4d4d4; border-radius: 4px;
`;
const Column = styled.div`display: flex; flex-direction: column;`;
const DisplayGrid = styled.div`display: grid; grid-template: repeat(3, 22px) / repeat(3, 37px); margin-top: -2px;`;
const Cell = styled.div`display: flex; align-items: center; gap: 2px;`;
const PlayColumn = styled.div`display: flex; flex-direction: column; justify-content: space-between; width: 21px; height: 62px; padding-top: 6px; margin-left: 14px;`;
const StepGrid = styled.div`display: grid; grid-template: repeat(3, 22px) / repeat(2, 31px); margin-top: -2px; justify-items: center;`;
const Speed = styled.div`
  display: flex; flex-direction: column; align-items: center; gap: 10px; margin-top: 7px;
  label { line-height: 16px; }
`;

const SelectBox = styled.div`
  display: grid; align-items: center; flex: none;
  width: ${(p) => p.$w}px; height: 20px; border: 1px solid #a0a0a0; background: #fff;
  > * { grid-area: 1 / 1; }
  select { appearance: none; width: 100%; height: 18px; border: 0; padding: 0 16px 0 2px; background: none; outline: 0; line-height: 18px; }
  svg { justify-self: end; margin-right: 5px; pointer-events: none; }
`;

const SelectionBar = styled(Bar)`height: 32px; border-bottom: 1px solid #7c8a94; background: #fff;`;
const Spacer = styled.span`flex: ${(p) => (p.$w ? "none" : 1)}; width: ${(p) => p.$w || 0}px;`;

const Workspace = styled.main`display: flex; flex: 1; min-height: 0;`;
const Rail = styled.nav`
  display: flex; flex-direction: column; flex: none;
  width: 32px; background: #dadada; border-right: 1px solid #a4a4a4;
`;
const RailButton = styled.button`
  display: flex; align-items: center; justify-content: center; flex: none;
  height: ${(p) => p.$h || 42}px;
  padding-top: ${(p) => (p.$low ? 10 : 0)}px;
  margin-bottom: ${(p) => (p.$apart ? 16 : 0)}px;
  ${(p) => p.$active && css`margin: 0 -1px 0 2px; background: #fff; border: 1px solid #a4a4a4; border-right: 0; height: 45px;`}
`;
const Navigator = styled.aside`
  display: flex; flex-direction: column; flex: none; width: 296px; padding: 0 10px 6px 6px;
  border-right: 1px solid #7c8a94; font-size: 12px;
`;
const NavHead = styled.header`
  display: flex; align-items: center; justify-content: space-between; flex: none;
  height: 29px; padding: 0 6px 0 4px;
  h2 { margin: 0; font-size: 12px; font-weight: 400; line-height: 18px; }
`;
const TreeFrame = styled.div`
  display: flex; flex-direction: column; flex: 1; min-height: 0;
  border: 2px solid #dcdcdc; border-top-width: 1px; border-bottom: 0;
`;
const TreeScroll = styled.div`flex: 1; min-height: 0; overflow: hidden;`;
const Tree = styled.table`
  width: 100%; table-layout: fixed; border-collapse: separate; border-spacing: 0; line-height: 18px;
  col:nth-child(1) { width: 200px; }
  col:nth-child(2) { width: 50px; }
  th, td { height: 20px; padding: 0; border-bottom: 1px solid #e6e6e6; border-right: 1px solid #e6e6e6; overflow: hidden; white-space: nowrap; }
  th:last-child, td:last-child { border-right: 0; }
  th { height: 21px; padding-left: 6px; font-weight: 400; text-align: left; background: #efefef; border-color: #d6d6d6; }
  td:first-child { border-right-color: #000; }
  tbody tr:nth-child(even) { background: #f9f9f9; }
`;
const Node = styled.div`
  display: flex; align-items: center; height: 19px; padding-left: ${(p) => p.$pad}px; gap: 3px;
  span { flex: 1; line-height: 19px; ${(p) => p.$selected && css`margin-left: -3px; padding-left: 3px; background: #8cc2d1;`} }
`;
const StateCell = styled.td`
  padding-left: 4px !important; ${(p) => p.$selected && css`background: #8cc2d1;`}
`;
const Guides = styled.svg`display: block; flex: none; margin-right: -3px;`;
const HScroll = styled.div`display: flex; align-items: center; flex: none; height: 18px; background: #ececec;`;
const HArrow = styled.button`display: flex; justify-content: center; width: 18px;`;
const HThumb = styled.button`
  width: 133px; height: 15px; border: 1px solid #8c8c8c; border-radius: 2px;
  background: linear-gradient(#f6f6f6, #dedede 50%, #c8c8cc); color: #555; display: flex; align-items: center; justify-content: center;
`;
const Splitter = styled.div`flex: none; height: 5px; border: 1px solid #a8a8a8; background: #d8d8d8;`;
const Fold = styled.button`
  display: flex; align-items: center; justify-content: space-between; flex: none;
  height: 24px; padding: 1px 5px 0 7px; border-bottom: 2px solid #d2d2d2;
  font-size: 14px; line-height: 21px; color: #00688b; width: 100%;
`;

const Graphics = styled.section`display: flex; flex-direction: column; flex: 1; min-width: 0;`;
const FileTabs = styled.div`display: flex; flex: none; height: 23px; border-bottom: 2px solid #54a0b9;`;
const FileTab = styled.div`
  display: flex; align-items: center; gap: 5px; padding: 0 4px 0 5px;
  background: #54a0b9; color: #fff; font-size: 12px; line-height: 20px;
`;
const Viewport = styled.div`
  position: relative; flex: 1; min-height: 0; overflow: hidden; margin-right: 1px;
  background: linear-gradient(#222325, #555657 70%, #565758);
`;
const Scene = styled.svg`
  display: block; width: 100%; height: 100%;
  text { font: 13px "Liberation Sans", sans-serif; }
`;
const Hint = styled.div`
  position: absolute; left: 196px; top: 298px;
  display: flex; align-items: center; gap: 4px; height: 23px; padding: 0 3px;
  background: #e3bdbb; border: 1px solid #b58f8d; color: #4a2c2c; font-size: 12px;
`;
const SpeedBadge = styled.svg`position: absolute; right: 0; bottom: 76px;`;

const StatusBar = styled(Bar)`
  height: 23px; border-top: 1px solid #a0a0a0; border-bottom: 1px solid #3c4a58; padding: 0 55px 2px 3px;
  font-weight: 700;
  > span:nth-child(1) { width: 593px; }
  svg { margin-left: auto; }
`;
const Taskbar = styled.footer`
  display: flex; align-items: center; flex: none; height: 39px;
  background: linear-gradient(90deg, #8193aa 0, #8193aa 120px, #a7c0dc 240px, #a7c0dc calc(100% - 335px), #8193aa calc(100% - 295px));
  border-top: 1px solid #b4c6da;
`;
const TaskButton = styled.button`
  display: flex; align-items: center; justify-content: center; flex: none;
  width: ${(p) => p.$w || 60}px; height: 38px;
  ${(p) => p.$open && css`
    margin-right: 2px; border: 1px solid #3e4c5e; border-radius: 3px;
    background: linear-gradient(135deg, #d3dee9, #a9bed4); box-shadow: inset 0 0 0 1px #eef4fa;`}
  ${(p) => p.$front && css`background: linear-gradient(135deg, #fff, #c8d8ea);`}
`;
const Clock = styled.time`
  width: 76px; color: #fff; font-size: 12px; line-height: 17px; text-align: center;
  display: flex; flex-direction: column; margin-left: 4px;
`;
const Desktop = styled.button`
  width: 15px; height: 38px; border: 1px solid #3e4c5e; background: linear-gradient(#7c8b9c, #46566a 50%, #8899ac);
`;

const Watermark = styled.div`
  position: absolute; right: 26px; bottom: 16px; display: flex; gap: 9px; pointer-events: none;
  color: #fff;
`;
const WatermarkText = styled.div`
  display: flex; flex-direction: column; opacity: .5; width: 176px;
  strong { display: flex; justify-content: space-between; font: bold 37px/44px "DejaVu Sans", "Noto Sans CJK SC", sans-serif; margin-top: 8px; }
  small { font: bold 16px/20px "DejaVu Sans", sans-serif; }
`;

/* ---------- data ---------- */

const tabs = ["装配", "曲线", "分析", "视图", "渲染", "工具", "应用模块", "星空 V6.936F"];
const rail = [
  ["railAssembly", "装配导航器"], ["railConstraint", "约束导航器"], ["railPart", "部件导航器"], ["railOp", "工序导航器"],
  ["railMachine", "加工特征导航器"], ["railFixture", "机床导航器"], ["railLibrary", "重用库"],
];
const railLow = [["railInfo", "HD3D 工具"], ["railWeb", "Web 浏览器"], ["railHistory", "历史记录"]];
const tray = ["keyboard", "trayBrowser", "shield", "plusBall", "bluetooth", "power", "signal", "speaker"];

const Big = ({ icon, label, w, menu, children }) => (
  <BigButton $w={w}>
    {children || <Icon name={icon} />}
    <BigLabel>{label}</BigLabel>
    {menu && <Caret />}
  </BigButton>
);
const MenuTool = ({ w = 13, label }) => <Tool $w={w} aria-label={label}><Caret /></Tool>;
const IconTool = ({ name, w, on, size }) => <Tool $w={w} $on={on} aria-label={name}><Icon name={name} size={size} /></Tool>;
const Foot = ({ children, pad }) => (
  <GroupFoot $pad={pad}><span>{children}</span><button aria-label={`${children}选项`}><Caret /></button></GroupFoot>
);
const Select = ({ w, label, id, children }) => (
  <SelectBox $w={w}>
    <select id={id} aria-label={label}><option>{children}</option></select>
    <Caret />
  </SelectBox>
);
const SingleGroup = ({ w, icon, label }) => (
  <Group $w={w}><GroupBody><Big w={w - 1} icon={icon} label={label} menu /></GroupBody></Group>
);

const BranchGuide = ({ drop, w = 12 }) => (
  <Guides width={w} height="19" fill="none" stroke="#888" strokeDasharray="1 1" aria-hidden="true">
    <path d={drop ? `M1.500 9v10M1 9.500h${w - 2}` : `M1.500 0v9M1 9.500h${w - 2}`} />
  </Guides>
);
const Expander = () => (
  <Guides width="14" height="19" fill="none" aria-hidden="true">
    <path d="M4.500 0v5M10 9.500h4" stroke="#888" strokeDasharray="1 1" />
    <rect x=".5" y="5.500" width="8" height="8" fill="#fff" stroke="#b4b4b4" />
    <path d="M2 9.500h5" stroke="#111" />
  </Guides>
);

const TreeRows = () => (
  <tbody>
    <tr><td><Node $pad={3}><span>GEOMETRY</span></Node></td><td /><td /></tr>
    <tr><td><Node $pad={8}><BranchGuide drop w={11} /><Icon name="folder" /><span>未用项</span></Node></td><td /><td /></tr>
    <tr><td><Node $pad={5}><Expander /><Icon name="csys" /><span>MCS_MILL</span></Node></td><td /><td /></tr>
    <tr><td><Node $pad={24}><Expander /><Icon name="workpiece" /><span>WORKPIECE</span></Node></td><td /><td /></tr>
    <tr>
      <td><Node $pad={46} $selected><BranchGuide w={10} /><Icon name="bang" size={15} /><Icon name="cavity" size={15} /><span>CAVITY_MILL</span></Node></td>
      <StateCell $selected><Icon name="tick" /></StateCell>
      <StateCell $selected>MILL</StateCell>
    </tr>
    {Array.from({ length: 40 }, (_, i) => <tr key={i}><td /><td /><td /></tr>)}
  </tbody>
);

const Model = () => (
  <Scene aria-label="加工模型与刀轨">
    <path d="M0 76L277 201L0 440z" fill="#ff7367" />
    <path d="M277 201L0 440V1201H265z" fill="#a4413b" />
    <path d="M0 76L277 201L0 440M277 201L265 1201" fill="none" stroke="#d8544b" strokeWidth="3" />
    <g>
      <path d="M31 460l13-8 13 8v18l-13 8-13-8z" fill="#c4b4b4" />
      <path d="M31 460l13 7 13-7M44 467v18" fill="none" stroke="#b8a6a6" />
      <path d="M46 484L26 475" stroke="#287828" strokeWidth="2" /><path d="M21 473l8 1-2 4z" fill="#38a038" />
      <path d="M46 484L62 473" stroke="#b02828" /><path d="M56 476l8-5-4 7z" fill="#e03030" />
      <path d="M46.500 483V466" stroke="#0828a0" strokeWidth="3" /><path d="M44 468l2.500-6 2.500 6z" fill="#0828a0" />
      <circle cx="46.500" cy="483" r="4.500" fill="url(#ball)" />
      <text x="43" y="460" fill="#3050e0">Z</text>
      <text x="13" y="475" fill="#389038">Y</text>
      <text x="62" y="471" fill="#c83838">X</text>
    </g>
    <path d="M356 253L30 534L-100 646" stroke="#00f4f4" strokeWidth="2.500" fill="none" />
    <path d="M355 253C390 228 425 225 463 233" stroke="#ffc800" strokeWidth="3" fill="none" />
    <path d="M463 234L464 178" stroke="#ffc800" strokeWidth="3" />
    <path d="M466 26L464 178" stroke="#0000fa" strokeWidth="3" strokeDasharray="8 8" />
    <text x="470" y="178" fill="#e8bc18">F25</text>
    <text x="469" y="233" fill="#e8bc18">F12.5000</text>
    <text x="360" y="253" fill="#18e8e0">F250</text>
  </Scene>
);

const WatermarkMark = () => (
  <svg width="72" height="78" viewBox="0 0 72 78" aria-hidden="true">
    <g opacity=".78">
      <path d="M36 0L15 12Q40 8 55 30Q58 16 50 8z" fill="#8fb4c8" />
      <path d="M51 9L72 20V48L57 38Q62 24 51 9z" fill="#2c86b4" />
      <path d="M0 20L13 13Q28 12 36 20L16 33Q10 38 15 55L0 62z" fill="#62b8e4" />
      <path d="M0 20L13 13Q28 12 36 20Q12 22 0 42z" fill="#4a9cc8" />
      <path d="M72 40Q66 56 48 60L20 56L57 44z" fill="#62c0ee" />
      <path d="M17 55Q28 68 72 56V60L36 78L16 68z" fill="#3494d0" />
      <path d="M36 23L53 32V50L36 60L20 50V32z" fill="#78c8f0" />
      <path d="M36 23L53 32L36 41L20 32z" fill="#5aa8d0" />
      <path d="M20 32L36 41L53 32M36 41V60" fill="none" stroke="#fff" strokeWidth="1.500" />
    </g>
  </svg>
);

export default function App() {
  return (
    <Page>
      <GlobalStyle />
      <Defs />
      <TitleBar>
        <Logo>NX</Logo>
        <Divider />
        <IconTool name="save" w={32} size={16} />
        <Divider />
        <IconTool name="undo" w={26} /><MenuTool label="撤销列表" />
        <Divider />
        <IconTool name="cut" w={27} size={16} /><IconTool name="copy" w={22} size={16} /><IconTool name="paste" /><IconTool name="aim" w={23} />
        <Divider />
        <IconTool name="shade" w={28} /><MenuTool label="显示样式" w={12} />
        <Divider />
        <IconTool name="hand" w={28} />
        <Divider />
        <TextTool $pad={5}><Icon name="switchWin" />切换窗口</TextTool>
        <TextTool><Icon name="win" />窗口</TextTool>
        <MenuTool w={12} label="窗口列表" /><Tool $w={12} aria-label="自定义"><Caret bar /></Tool>
        <WindowTitle>NX 12 - 加工</WindowTitle>
        <Brand>SIEMENS</Brand>
        <IconTool name="minimise" w={22} /><IconTool name="restore" w={24} /><IconTool name="close" w={22} />
        <Spacer $w={2} />
      </TitleBar>

      <TabBar>
        <Tab $file>文件(F)</Tab>
        <Tab $active>主页</Tab>
        {tabs.map((t) => <Tab key={t}>{t}</Tab>)}
        <TabTools>
          <Search><input aria-label="查找命令" placeholder="查找命令" /><Icon name="find" /></Search>
          <IconTool name="fullscreen" /><IconTool name="collapse" w={28} /><IconTool name="help" /><IconTool name="cap" w={26} />
          <TextTool>教程</TextTool>
        </TabTools>
      </TabBar>

      <Ribbon>
        <Group $w={210}>
          <GroupBody $pad={6}>
            <Big w={58} icon="createTool" label="创建刀具" />
            <Big w={58} icon="createGeo" label="创建几何体" />
            <Big w={60} icon="createOp" label="创建工序" />
            <Column><IconTool name="program" w={18} /><IconTool name="method" w={18} /></Column>
          </GroupBody>
          <Foot pad={4}>刀片</Foot>
        </Group>
        <Group $w={55}>
          <GroupBody><Big w={54} icon="attrs" label="属性" menu /></GroupBody>
          <Foot pad={4}>操作</Foot>
        </Group>
        <Group $w={311}>
          <GroupBody $pad={8}>
            <Big w={53} icon="generate" label="生成刀轨" />
            <Big w={53} icon="verify" label="确认刀轨" />
            <Big w={53} icon="simulate" label="机床仿真" />
            <Big w={42} icon="post" label="后处理" />
            <Big w={54} icon="docs" label="车间文档" />
            <Big w={47} label="更多" menu><MoreFrame><Icon name="more" /></MoreFrame></Big>
          </GroupBody>
          <Foot pad={4}>工序</Foot>
        </Group>
        <Group $w={125}>
          <GroupBody $pad={9}>
            <DisplayGrid>
              <Cell><IconTool name="probe" w={23} /><Caret /></Cell>
              <Cell><IconTool name="layers" w={23} /><Caret /></Cell>
              <Cell><IconTool name="pointer" w={23} /></Cell>
              <Cell><IconTool name="hatchArrow" w={23} on /></Cell>
              <Cell><IconTool name="curve" w={23} /></Cell>
              <Cell><IconTool name="holder" w={23} /><Caret /></Cell>
              <Cell><IconTool name="hatchLoop" w={23} on /></Cell>
              <Cell><IconTool name="circleDot" w={23} /></Cell>
              <Cell><IconTool name="lineDot" w={23} /><Caret /></Cell>
            </DisplayGrid>
          </GroupBody>
          <Foot pad={4}>显示</Foot>
        </Group>
        <Group $w={186}>
          <GroupBody>
            <PlayColumn><IconTool name="play" w={26} /><IconTool name="pause" w={22} /></PlayColumn>
            <StepGrid>
              <IconTool name="toStart" /><IconTool name="toEnd" />
              <IconTool name="stepBack" /><IconTool name="stepFwd" />
              <IconTool name="back" />
            </StepGrid>
            <Speed><Select w={79} id="speed" label="速度">5</Select><label htmlFor="speed">速度</label></Speed>
          </GroupBody>
          <Foot pad={4}>动画</Foot>
        </Group>
        <SingleGroup w={43} icon="part" label="工件" />
        <Group $w={72}>
          <GroupBody><Big w={71} icon="gcTool" label={<><span>加工工具 -<br />GC工具箱</span><Caret /></>} /></GroupBody>
        </Group>
        <SingleGroup w={43} icon="analyse" label="分析" />
        <SingleGroup w={44} icon="plus" label="几何体" />
        <SingleGroup w={55} icon="sync" label="同步建模" />
        <SingleGroup w={43} icon="feature" label="特征" />
        <Spacer />
        <Column><Spacer /><MenuTool w={16} label="功能区选项" /></Column>
      </Ribbon>

      <SelectionBar>
        <Spacer $w={9} />
        <TextTool><Icon name="menu" /><span>菜单(<u>M</u>)</span></TextTool><MenuTool w={14} label="菜单" />
        <Spacer $w={3} /><Divider $h={24} /><Spacer $w={8} />
        <IconTool name="viewProgram" /><IconTool name="viewTool" w={27} /><IconTool name="viewGeo" w={23} on /><IconTool name="viewMethod" w={26} />
        <Spacer $w={5} /><Divider $h={24} /><Spacer $w={9} />
        <IconTool name="showPath" w={23} on /><IconTool name="showIpw" w={26} />
        <Spacer $w={5} /><Divider $h={24} /><Spacer $w={12} />
        <Select w={133} label="选择过滤器">无选择过滤器</Select>
        <Spacer $w={9} />
        <Select w={140} label="选择范围">整个装配</Select>
        <Spacer $w={4} />
        <IconTool name="ghostTree" /><IconTool name="ghostFilter" /><IconTool name="redFilter" w={22} /><MenuTool label="过滤器选项" />
        <IconTool name="undoSel" w={26} /><IconTool name="hammer" /><IconTool name="cubeTarget" /><IconTool name="dashRect" w={25} /><MenuTool label="框选选项" />
        <IconTool name="fold" /><IconTool name="bluebox" />
        <Spacer $w={8} /><Divider $h={24} /><Spacer $w={8} />
        <IconTool name="fit" /><IconTool name="pan" /><IconTool name="rotate" /><IconTool name="persp" w={26} /><IconTool name="ghostSheet" />
        <IconTool name="windowRed" w={26} /><MenuTool label="窗口布局" />
        <IconTool name="section" /><MenuTool label="剖切选项" />
        <IconTool name="shadedBox" w={25} /><MenuTool label="渲染样式" />
        <IconTool name="mirrorView" w={23} /><MenuTool label="视图选项" />
        <Spacer $w={6} /><Divider $h={24} />
        <Spacer />
        <MenuTool w={18} label="工具条选项" />
      </SelectionBar>

      <Workspace>
        <Rail>
          <RailButton $h={26} $apart aria-label="设置"><Icon name="gear" /></RailButton>
          {rail.map(([n, label]) => (
            <RailButton key={n} $active={n === "railOp"} aria-label={label}><Icon name={n} /></RailButton>
          ))}
          {railLow.map(([n, label]) => <RailButton key={n} $h={52} $low aria-label={label}><Icon name={n} /></RailButton>)}
          <RailButton $h={15} aria-label="到顶"><Caret bar up muted /></RailButton>
          <RailButton $h={15} aria-label="向上"><Caret up muted /></RailButton>
          <RailButton $h={15} aria-label="向下"><Caret /></RailButton>
          <RailButton $h={15} aria-label="到底"><Caret bar /></RailButton>
        </Rail>

        <Navigator>
          <NavHead><h2>工序导航器 - 几何</h2><button aria-label="最大化"><Icon name="windowBox" /></button></NavHead>
          <TreeFrame>
            <TreeScroll>
              <Tree>
                <colgroup><col /><col /><col /></colgroup>
                <thead><tr><th>名称</th><th>刀轨</th><th>刀具</th></tr></thead>
                <TreeRows />
              </Tree>
            </TreeScroll>
            <HScroll>
              <HArrow aria-label="向左"><IconSvg width="7" height="8"><path d="M5 1v6L2 4z" fill="#222" /></IconSvg></HArrow>
              <HThumb aria-label="滚动条"><IconSvg width="9" height="7"><path d="M1.500 0v7M4.500 0v7M7.500 0v7" stroke="#555" /></IconSvg></HThumb>
              <Spacer />
              <HArrow aria-label="向右"><IconSvg width="7" height="8"><path d="M2 1v6l3-3z" fill="#222" /></IconSvg></HArrow>
            </HScroll>
          </TreeFrame>
          <Splitter />
          <Fold>相关性<Icon name="chevron" /></Fold>
          <Fold>细节<Icon name="chevron" /></Fold>
        </Navigator>

        <Graphics>
          <FileTabs>
            <FileTab><Icon name="tabTool" />_model2.prt<Icon name="edit" /><Icon name="x" /></FileTab>
          </FileTabs>
          <Viewport>
            <Model />
            <Hint><Icon name="extrude" />拉伸(1)</Hint>
          </Viewport>
        </Graphics>
      </Workspace>

      <StatusBar><span>选择现有的坐标系</span><span>拉伸(1)</span><Icon name="fullscreen" /></StatusBar>

      <Taskbar>
        <TaskButton $w={54} aria-label="开始"><Icon name="start" /></TaskButton>
        <TaskButton $w={60} aria-label="任务"><Icon name="clover" /></TaskButton>
        <Spacer $w={5} />
        <TaskButton $open aria-label="浏览器"><Icon name="browser" /></TaskButton>
        <TaskButton $open $front aria-label="NX"><Icon name="nxApp" /></TaskButton>
        <Spacer />
        {tray.map((n, i) => <IconTool key={n} name={n} w={i === 0 ? 36 : 24} size={i === 0 ? 16 : 18} />)}
        <Clock><span>21:15</span><span>2018/12/11</span></Clock>
        <Desktop aria-label="显示桌面" />
      </Taskbar>

      <SpeedBadge width="19" height="48" viewBox="0 0 19 48">
        <circle cx="24" cy="24" r="22" fill="url(#badge)" stroke="#fff" strokeWidth="3" />
        <circle cx="24" cy="24" r="20" fill="none" stroke="#238a48" />
        <text x="5" y="28" fill="#fff" fontSize="11" fontWeight="700">52</text>
      </SpeedBadge>
      <Watermark>
        <WatermarkMark />
        <WatermarkText><strong><span>3D</span><span>世界网</span></strong><small>WWW.3DSJW.COM</small></WatermarkText>
      </Watermark>
    </Page>
  );
}
